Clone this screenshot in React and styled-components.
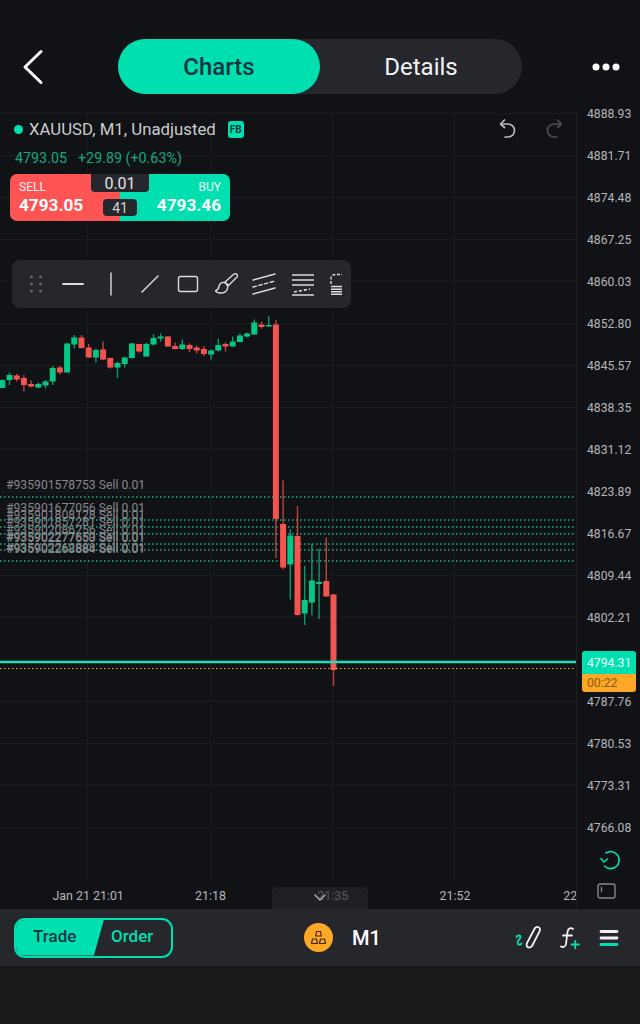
import React from 'react';
import styled, { createGlobalStyle } from 'styled-components';

const TEAL = '#00dfb0';
const GREEN = '#08c786';
const RED = '#f4544f';
const ORANGE = '#ffa726';

const GlobalStyle = createGlobalStyle`
  html, body { margin: 0; padding: 0; background: #18191b; }
  * { box-sizing: border-box; }
`;

const Page = styled.div`
  width: 640px;
  height: 1024px;
  display: flex;
  flex-direction: column;
  background: #111215;
  font-family: Roboto, 'Liberation Sans', sans-serif;
  overflow: hidden;
`;

const Header = styled.header`
  display: flex;
  align-items: center;
  height: 55px;
  margin: 39px 0 16px;
  padding: 0 20px 0 22px;
`;

const Segment = styled.div`
  width: 404px;
  height: 55px;
  margin-left: 74px;
  margin-right: auto;
  display: flex;
  border-radius: 28px;
  background: #26272d;
`;

const SegmentItem = styled.div`
  width: 202px;
  display: flex;
  align-items: center;
  justify-content: center;
  border-radius: 28px;
  font-size: 24px;
  font-weight: ${({ $active }) => ($active ? 500 : 400)};
  color: ${({ $active }) => ($active ? '#0f3640' : '#f2f2f2')};
  background: ${({ $active }) => ($active ? TEAL : 'transparent')};
`;

const ChartArea = styled.main`
  display: flex;
  height: 799px;
`;

const Plot = styled.div`
  position: relative;
  width: 576px;
  display: flex;
  flex-direction: column;
  overflow: hidden;
`;

const ChartSvg = styled.svg`
  display: block;
  width: 576px;
  height: 772px;
`;

const Legend = styled.div`
  position: absolute;
  top: 8px;
  left: 10px;
  width: 556px;
  display: flex;
  flex-direction: column;
`;

const LegendTitle = styled.div`
  height: 22px;
  display: flex;
  align-items: center;
  padding-left: 4px;
  font-size: 16.8px;
  color: #c9cbce;
`;

const LiveDot = styled.span`
  width: 9px;
  height: 9px;
  margin-right: 6px;
  border-radius: 50%;
  background: ${TEAL};
`;

const Badge = styled.span`
  width: 16px;
  height: 17px;
  margin-left: 12px;
  display: flex;
  align-items: center;
  justify-content: center;
  border-radius: 3px;
  background: ${TEAL};
  color: #0c3a35;
  font-size: 10px;
  font-weight: 700;
`;

const HistoryIcons = styled.div`
  margin-left: auto;
  margin-right: 1px;
  display: flex;
  gap: 28px;
`;

const LegendQuote = styled.div`
  height: 17px;
  margin-top: 9px;
  padding-left: 5px;
  display: flex;
  gap: 11px;
  align-items: center;
  font-size: 14.3px;
  color: #14a87c;
`;

const Ticket = styled.div`
  position: relative;
  width: 220px;
  height: 47px;
  margin-top: 8px;
  display: flex;
  border-radius: 7px;
  overflow: hidden;
`;

const TicketSide = styled.div`
  width: 110px;
  display: flex;
  flex-direction: column;
  padding: 7px 9px 0 9px;
  align-items: ${({ $side }) => ($side === 'buy' ? 'flex-end' : 'flex-start')};
  background: ${({ $side }) => ($side === 'buy' ? TEAL : '#ff5454')};
  color: #fff;
`;

const TicketLabel = styled.span`
  font-size: 12px;
  line-height: 13px;
  opacity: 0.92;
`;

const TicketPrice = styled.span`
  font-size: 17.2px;
  line-height: 22px;
  font-weight: 700;
`;

const LotBox = styled.div`
  position: absolute;
  top: 0;
  left: 81px;
  width: 58px;
  height: 18px;
  display: flex;
  align-items: center;
  justify-content: center;
  border-radius: 0 0 4px 4px;
  background: #26272d;
  color: #e2e3e5;
  font-size: 16px;
`;

const SpreadBox = styled.div`
  position: absolute;
  top: 25px;
  left: 93px;
  width: 34px;
  height: 17px;
  display: flex;
  align-items: center;
  justify-content: center;
  border-radius: 4px;
  background: #26272d;
  color: #d0d1d4;
  font-size: 14px;
`;

const DrawBar = styled.div`
  position: absolute;
  top: 150px;
  left: 12px;
  width: 339px;
  height: 48px;
  padding-left: 5px;
  display: flex;
  align-items: center;
  border-radius: 8px;
  background: #26272d;
  overflow: hidden;
`;

const DrawTool = styled.div`
  flex: 0 0 38.3px;
  display: flex;
  justify-content: center;

  &:first-child {
    flex-basis: 35.8px;
    margin-left: 1px;
  }
`;

const OrderLabel = styled.div`
  position: absolute;
  left: 6px;
  top: ${({ $y }) => $y}px;
  font-size: 12.2px;
  line-height: 14px;
  color: #85878c;
  white-space: nowrap;
`;

const TimeAxis = styled.div`
  height: 27px;
  padding-left: 27px;
  display: flex;
  align-items: center;
  flex-shrink: 0;
  color: #b4b6ba;
  font-size: 12.4px;
`;

const TimeLabel = styled.span`
  flex: 0 0 122.3px;
  white-space: nowrap;
  text-align: ${({ $trim }) => ($trim ? 'left' : 'center')};
  padding-left: ${({ $trim }) => ($trim ? '47px' : '0')};
`;

const CollapseTab = styled.div`
  position: absolute;
  left: 272px;
  bottom: 0;
  width: 96px;
  height: 22px;
  display: flex;
  justify-content: center;
  padding-top: 6px;
  border-radius: 5px 5px 0 0;
  background: rgba(38, 39, 45, 0.66);
`;

const PriceAxis = styled.aside`
  position: relative;
  flex: 1;
  border-left: 1px solid #1e1f23;
  display: flex;
  flex-direction: column;
`;

const PriceLabel = styled.div`
  height: 42px;
  flex-shrink: 0;
  padding-left: 10px;
  font-size: 12.2px;
  line-height: 8px;
  color: #b4b6ba;
`;

const PriceTag = styled.div`
  position: absolute;
  top: 541px;
  left: 5px;
  width: 54px;
  border-radius: 3px;
  overflow: hidden;
  font-size: 12.2px;
`;

const TagRow = styled.div`
  height: ${({ $h }) => $h}px;
  padding-left: 5px;
  display: flex;
  align-items: center;
  background: ${({ $bg }) => $bg};
  color: ${({ $fg }) => $fg};
`;

const AxisButtons = styled.div`
  position: absolute;
  top: 739px;
  left: 20px;
  display: flex;
  flex-direction: column;
  gap: 12px;
  align-items: flex-start;
`;

const BottomBar = styled.footer`
  height: 57px;
  padding: 0 21px 0 14px;
  display: flex;
  align-items: center;
  background: #26272d;
`;

const OrderSwitch = styled.div`
  position: relative;
  width: 159px;
  height: 40px;
  display: flex;
  border: 2px solid ${TEAL};
  border-radius: 11px;
  overflow: hidden;
`;

const TradeButton = styled.div`
  width: 88px;
  padding: 0 0 3px 17px;
  display: flex;
  align-items: center;
  clip-path: polygon(0 0, 100% 0, 88.5% 100%, 0 100%);
  background: ${TEAL};
  color: #0f3640;
  font-size: 17px;
  font-weight: 500;
`;

const OrderButton = styled.div`
  flex: 1;
  padding: 0 0 3px 7px;
  display: flex;
  align-items: center;
  color: ${TEAL};
  font-size: 17px;
  font-weight: 500;
`;

const Period = styled.div`
  margin-left: 131px;
  display: flex;
  align-items: center;
  gap: 19px;
  color: #fff;
  font-size: 20px;
  font-weight: 500;
`;

const Coin = styled.div`
  width: 29px;
  height: 29px;
  display: flex;
  align-items: center;
  justify-content: center;
  border-radius: 50%;
  background: ${ORANGE};
`;

const BarTools = styled.div`
  margin-left: auto;
  display: flex;
  align-items: center;
  gap: 18px;
`;

const Bottom = styled.div`
  flex: 1;
  background: #18191b;
`;

const prices = ['4888.93', '4881.71', '4874.48', '4867.25', '4860.03', '4852.80', '4845.57', '4838.35', '4831.12', '4823.89', '4816.67', '4809.44', '4802.21', '', '4787.76', '4780.53', '4773.31', '4766.08'];

// body top, body bottom, wick top, wick bottom (page px), g/r
const candles = [
  [380, 388, 379.5, 388, 'g'], [375, 380, 372.5, 385, 'g'], [375.5, 379.5, 374, 381.5, 'r'], [378, 385, 375, 391.5, 'r'],
  [384, 386.5, 380.5, 387.5, 'r'], [384, 387.5, 382.5, 388.5, 'g'], [381.5, 385.5, 380, 388.5, 'g'], [368, 381.5, 366, 385, 'g'],
  [367.5, 372.5, 366, 374.5, 'r'], [343.5, 372.5, 343, 372.5, 'g'], [337.5, 344.5, 335, 348.5, 'g'], [337.5, 348, 335, 348.5, 'r'],
  [347.5, 357.5, 344, 358, 'r'], [350, 357.5, 348.5, 362.5, 'g'], [349.5, 359.5, 341.5, 360, 'r'], [358, 367.5, 357.5, 368.5, 'r'],
  [363, 367.5, 361.5, 378, 'g'], [357.5, 364, 356.5, 367.5, 'g'], [343.5, 358, 343, 358.5, 'g'], [344, 351.5, 343.5, 352.5, 'r'],
  [344, 356.5, 342.5, 356.5, 'g'], [338, 344.5, 334, 345.5, 'g'], [336.5, 338.5, 333.5, 341.5, 'g'], [336.5, 346.5, 336, 347, 'r'],
  [346, 349, 342.5, 349.5, 'r'], [344.5, 349, 339.5, 350, 'g'], [345, 349, 343.5, 352, 'r'], [347.5, 350.5, 345.5, 353.5, 'r'],
  [349, 354, 346, 356, 'r'], [350.5, 354.5, 349.5, 359.5, 'g'], [345, 350.5, 338.5, 351.5, 'g'], [344, 346.5, 342.5, 351.5, 'r'],
  [341.5, 346.5, 336.5, 346.5, 'g'], [335.5, 342, 333.5, 342.5, 'g'], [333.5, 336.5, 332.5, 337.5, 'g'], [322.5, 334.5, 319.5, 335, 'g'],
  [324.5, 327, 321.5, 328.5, 'r'], [325, 326.5, 316, 326.5, 'g'], [324.5, 519, 320, 558, 'r'], [524, 567.5, 480.5, 569.5, 'r'],
  [535.5, 564.5, 529.5, 599.5, 'g'], [536, 615, 506, 615.5, 'r'], [600, 613.5, 566, 625, 'g'], [580.5, 602.5, 543.5, 615.5, 'g'],
  [582, 584, 548.5, 619, 'g'], [581, 596.5, 537.5, 596.5, 'r'], [594.5, 670, 594, 686, 'r'],
];

const orderLines = [497, 520, 527, 534, 544, 550, 561];

const orders = [
  { id: '#935901578753', y: 368 },
  { id: '#935901677056', y: 391 },
  { id: '#935901808128', y: 398 },
  { id: '#935901857281', y: 405 },
  { id: '#935902086256', y: 413 },
  { id: '#935902277650', y: 420 },
  { id: '#935902277653', y: 421 },
  { id: '#935902262888', y: 431 },
  { id: '#935902268884', y: 432 },
];

const PriceChart = () => (
  <ChartSvg viewBox="0 110 576 772">
    <g stroke="#1a1b1f" strokeWidth="1">
      {prices.map((_, i) => {
        const y = Math.round(112.5 + i * 42) + 0.5;
        return <line key={i} x1="0" x2="576" y1={y} y2={y} />;
      })}
      {[87, 210, 332, 454].map((x) => (
        <line key={x} x1={x + 0.5} x2={x + 0.5} y1="110" y2="882" />
      ))}
    </g>
    <g stroke="#17b384" strokeWidth="1.3" strokeDasharray="1.5 2.5">
      {orderLines.map((y) => (
        <line key={y} x1="0" x2="578" y1={y} y2={y} />
      ))}
    </g>
    {candles.map(([top, bottom, wickTop, wickBottom, dir], i) => {
      const x = 2.3 + i * 7.2;
      const color = dir === 'g' ? GREEN : RED;
      return (
        <g key={i}>
          <rect x={x - 0.7} y={wickTop} width="1.4" height={wickBottom - wickTop} fill={color} opacity="0.75" />
          <rect x={x - 3} y={top} width="6" height={bottom - top} fill={color} />
        </g>
      );
    })}
    <line x1="0" x2="578" y1="662" y2="662" stroke="#1fe0b4" strokeWidth="2.4" />
    <line x1="0" x2="578" y1="668.5" y2="668.5" stroke={ORANGE} strokeWidth="1" strokeDasharray="1.5 2.5" />
  </ChartSvg>
);

const UndoIcon = ({ dim, flip }) => (
  <svg width="20" height="22" viewBox="0 0 20 22" fill="none" stroke={dim ? '#4b4d51' : '#b9bbbe'} strokeWidth="1.7" strokeLinecap="round" strokeLinejoin="round" style={flip ? { transform: 'scaleX(-1)' } : undefined}>
    <path d="M5 6h6a6.5 6.5 0 0 1 0 13H8" />
    <path d="M7.5 2L3.5 6l4 3.5" />
  </svg>
);

const ToolSvg = ({ children }) => (
  <svg width="26" height="26" viewBox="0 0 26 26" fill="none" stroke="#dcdcde" strokeWidth="1.4" strokeLinecap="round" strokeLinejoin="round">
    {children}
  </svg>
);

const drawTools = [
  <g key="grip" fill="#6c6e72" stroke="none">
    {[6, 13, 20].map((y) => [8.5, 17.5].map((x) => <circle key={`${x}-${y}`} cx={x} cy={y} r="1.3" />))}
  </g>,
  <path key="h" d="M3 13h20" strokeWidth="1.8" />,
  <path key="v" d="M13 2v22" />,
  <path key="d" d="M5 21L21 5" />,
  <rect key="r" x="3.5" y="5.5" width="19" height="15" rx="2" />,
  <g key="b">
    <path d="M24 3.5c-1-1.3-2.6-1-3.6 0L12 11l3.5 3.5L24 6c.6-.8.6-1.7 0-2.5z" />
    <path d="M11.5 11.500c-3-.6-5 1.300-5.500 4-.3 1.800-1.600 3.500-3.500 4.200 1.500 3 9.500 3.500 11.500-1 1-2 1-4-.5-5.500z" />
  </g>,
  <g key="c">
    <path d="M2 9L24 3M2 23l22-6" />
    <path d="M2 16l22-6" strokeDasharray="3.500 2.500" />
  </g>,
  <g key="f" strokeWidth="1.7" strokeLinecap="butt">
    <path d="M2 4h22M2 9h22M2 14h22M2 24h22" />
    <path d="M4 21l16-3" strokeDasharray="3 2" />
  </g>,
];

const PartialFib = () => (
  <svg width="26" height="26" viewBox="0 0 26 26" fill="none" stroke="#dcdcde" strokeWidth="1.4" style={{ marginLeft: 6, flexShrink: 0 }}>
    <path d="M3 13V7c0-2 2-3.500 5-3.500h6" strokeDasharray="3 1.500" />
    <path d="M3 15.500h11M3 18.300h11M3 20.800h11M3 23.300h11" />
  </svg>
);

const CoinIcon = () => (
  <svg width="17" height="17" viewBox="0 0 17 17" fill="none" stroke="#3a2a10" strokeWidth="1.2" strokeLinejoin="round">
    <path d="M6.500 2.500h4l.8 4.500H5.700zM2.500 10h4l1 4.500h-6zM10.500 10h4l1 4.500h-6z" />
  </svg>
);

export default function App() {
  return (
    <Page>
      <GlobalStyle />
      <Header>
        <svg width="22" height="36" viewBox="0 0 22 36" fill="none" stroke="#fff" strokeWidth="3" strokeLinecap="round" strokeLinejoin="round">
          <path d="M19 2.500L3 18l16 15.500" />
        </svg>
        <Segment>
          <SegmentItem $active>Charts</SegmentItem>
          <SegmentItem>Details</SegmentItem>
        </Segment>
        <svg width="28" height="8" viewBox="0 0 28 8" fill="#fff">
          <circle cx="4" cy="4" r="3.500" />
          <circle cx="14" cy="4" r="3.500" />
          <circle cx="24" cy="4" r="3.500" />
        </svg>
      </Header>

      <ChartArea>
        <Plot>
          <PriceChart />
          <TimeAxis>
            <TimeLabel>Jan 21 21:01</TimeLabel>
            <TimeLabel>21:18</TimeLabel>
            <TimeLabel>21:35</TimeLabel>
            <TimeLabel>21:52</TimeLabel>
            <TimeLabel $trim>22:</TimeLabel>
          </TimeAxis>

          <Legend>
            <LegendTitle>
              <LiveDot />
              XAUUSD, M1, Unadjusted
              <Badge>FB</Badge>
              <HistoryIcons>
                <UndoIcon />
                <UndoIcon dim flip />
              </HistoryIcons>
            </LegendTitle>
            <LegendQuote>
              <span>4793.05</span>
              <span>+29.89 (+0.63%)</span>
            </LegendQuote>
            <Ticket>
              <TicketSide $side="sell">
                <TicketLabel>SELL</TicketLabel>
                <TicketPrice>4793.05</TicketPrice>
              </TicketSide>
              <TicketSide $side="buy">
                <TicketLabel>BUY</TicketLabel>
                <TicketPrice>4793.46</TicketPrice>
              </TicketSide>
              <LotBox>0.01</LotBox>
              <SpreadBox>41</SpreadBox>
            </Ticket>
          </Legend>

          <DrawBar>
            {drawTools.map((tool) => (
              <DrawTool key={tool.key}>
                <ToolSvg>{tool}</ToolSvg>
              </DrawTool>
            ))}
            <PartialFib />
          </DrawBar>

          {orders.map((order) => (
            <OrderLabel key={order.id} $y={order.y}>{order.id} Sell 0.01</OrderLabel>
          ))}

          <CollapseTab>
            <svg width="14" height="9" viewBox="0 0 14 9" fill="none" stroke="#a8aaae" strokeWidth="1.5" strokeLinecap="round" strokeLinejoin="round">
              <path d="M2 2l5 5 5-5" />
            </svg>
          </CollapseTab>
        </Plot>

        <PriceAxis>
          {prices.map((price, i) => (
            <PriceLabel key={i}>{price}</PriceLabel>
          ))}
          <PriceTag>
            <TagRow $h={23} $bg={TEAL} $fg="#f2fffb">4794.31</TagRow>
            <TagRow $h={18} $bg={ORANGE} $fg="#8a5a12">00:22</TagRow>
          </PriceTag>
          <AxisButtons>
            <svg width="24" height="22" viewBox="0 0 24 22" fill="none" stroke={TEAL} strokeWidth="1.6" strokeLinecap="round" strokeLinejoin="round" style={{ marginLeft: 2 }}>
              <path d="M7 4a8.500 8.500 0 1 1-1.500 13" />
              <path d="M2 9.500l3 3.500 3.500-3" />
            </svg>
            <svg width="19" height="16" viewBox="0 0 19 16" fill="none" stroke="#85878c" strokeWidth="1.4" strokeLinecap="round" strokeLinejoin="round">
              <rect x="1" y="1" width="17" height="14" rx="2" />
              <path d="M4.500 4.500v4" />
            </svg>
          </AxisButtons>
        </PriceAxis>
      </ChartArea>

      <BottomBar>
        <OrderSwitch>
          <TradeButton>Trade</TradeButton>
          <OrderButton>Order</OrderButton>
        </OrderSwitch>
        <Period>
          <Coin><CoinIcon /></Coin>
          M1
        </Period>
        <BarTools>
          <svg width="26" height="26" viewBox="0 0 26 26" fill="none" strokeWidth="1.8" strokeLinecap="round" strokeLinejoin="round">
            <path d="M1.500 12c1-2 4-2 4 0 0 2-3 3-3 5.500s3 3 4 1" stroke={TEAL} />
            <path d="M20 3c1-1.500 3.500-1.500 4.500 0 .8 1 .4 2.500 0 3.500L17 21c-1 1.500-3.500 2-4.500 1-1-.8-1-2.500-.5-4z" stroke="#f2f2f2" />
          </svg>
          <svg width="22" height="26" viewBox="0 0 22 26" fill="none" strokeWidth="1.8" strokeLinecap="round">
            <path d="M14 4c-2-1.500-5-1-5.500 3L7 19c-.4 3-3 3.500-5 2.500M4 10.500h9" stroke="#f2f2f2" />
            <path d="M12.500 19.500h7.500M16.200 15.800v7.500" stroke={TEAL} />
          </svg>
          <svg width="20" height="18" viewBox="0 0 20 18" fill="none" strokeWidth="2.8" strokeLinecap="round">
            <path d="M2 2.500h16M2 9h16" stroke="#f2f2f2" />
            <path d="M2 15.500h16" stroke={TEAL} />
          </svg>
        </BarTools>
      </BottomBar>
      <Bottom />
    </Page>
  );
}
